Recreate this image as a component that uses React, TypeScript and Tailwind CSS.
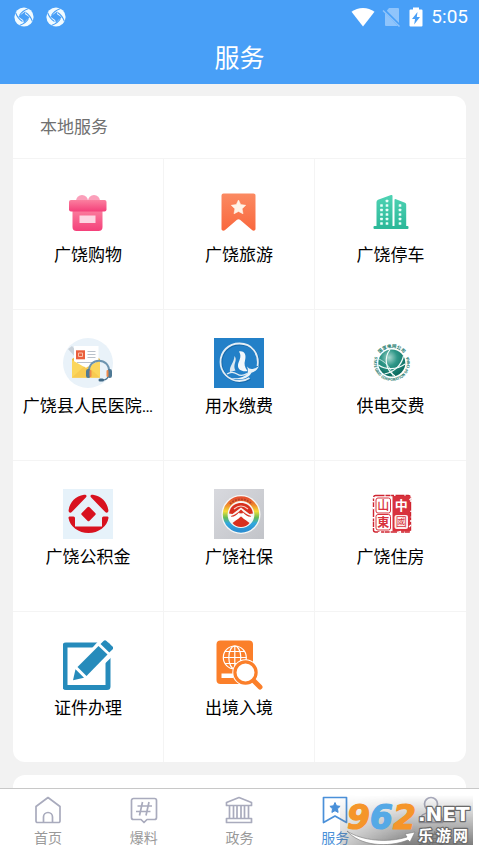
import type { ReactNode } from "react";
import clsx from "clsx";

const GiftIcon = () => (
  <svg viewBox="0 0 50 50" className="size-[50px]" aria-hidden="true">
    <defs>
      <linearGradient id="gift" x1="0" y1="0" x2="0" y2="1">
        <stop offset="0" stopColor="#fb7f9f" />
        <stop offset="1" stopColor="#f4407a" />
      </linearGradient>
    </defs>
    <circle cx="19" cy="14" r="6" fill="#fb9fba" />
    <circle cx="31" cy="14" r="6" fill="#fb9fba" />
    <path d="M9.500 22h30v18a4 4 0 0 1-4 4h-22a4 4 0 0 1-4-4z" fill="url(#gift)" />
    <rect x="6" y="13" width="37.500" height="11.500" rx="2" fill="url(#gift)" />
    <rect x="16.500" y="28.500" width="16" height="7.500" fill="#fdd5e2" />
  </svg>
);

const TravelIcon = () => (
  <svg viewBox="0 0 50 50" className="size-[50px]" aria-hidden="true">
    <defs>
      <linearGradient id="travel" x1="0" y1="0" x2="0" y2="1">
        <stop offset="0" stopColor="#fb8a62" />
        <stop offset="1" stopColor="#f9683e" />
      </linearGradient>
    </defs>
    <path d="M9.500 6.500h30a2 2 0 0 1 2 2v33.500c0 1.500-2 2.200-3.200 1.200L26 32.800q-1.500-1.200-3 0L10.800 43.200c-1.300 1-3.300.3-3.300-1.200V8.500a2 2 0 0 1 2-2z" fill="url(#travel)" />
    <path d="M24.500 13l2.200 4.600 5 .7-3.600 3.500.9 5-4.500-2.400-4.500 2.400.9-5-3.600-3.500 5-.7z" fill="#fff3e8" stroke="#fff3e8" strokeWidth=".6" strokeLinejoin="round" />
  </svg>
);

const windows = [
  [21, 14], [15.5, 18.5], [21, 18.5], [34, 18.5],
  [15.5, 23], [21, 23], [34, 23],
  [15.5, 27.5], [21, 27.5], [34, 27.5],
  [15.5, 32], [21, 32], [34, 32],
  [15.5, 36.5], [21, 36.5], [34, 36.5],
];

const ParkingIcon = () => (
  <svg viewBox="0 0 50 50" className="size-[50px]" aria-hidden="true">
    <defs>
      <linearGradient id="parking" x1="0" y1="0" x2="0" y2="1">
        <stop offset="0" stopColor="#4fd3b4" />
        <stop offset="1" stopColor="#2db99a" />
      </linearGradient>
    </defs>
    <path d="M10.500 40V15q0-1.500 1.500-2.200L25 8q1.500-.5 1.500 1v31zM28.500 40V13q0-1.500 1.500-.8l9 3.600q1.200.6 1.200 1.700V40z" fill="url(#parking)" />
    <rect x="7.500" y="39" width="35" height="3" rx="1" fill="#2db99a" />
    {windows.map(([x, y]) => (
      <rect key={`${x}-${y}`} x={x - 1.3} y={y - 1.3} width="2.600" height="2.600" rx=".5" fill="#eafff9" />
    ))}
  </svg>
);

const HospitalIcon = () => (
  <svg viewBox="0 0 50 50" className="size-[50px]" aria-hidden="true">
    <circle cx="25" cy="25" r="25" fill="#e9f2f9" />
    <path d="M5 11l4-3 5 6v7z" fill="#c9d2da" />
    <path d="M9 21l14-9 14 9v18.500H9z" fill="#efbd45" />
    <path d="M11 8h24.500v18L23 32 11 26z" fill="#fff" />
    <rect x="13" y="12.300" width="9" height="9" fill="#ea5f3d" />
    <path d="M15.500 15h4v3.500h-4z" fill="none" stroke="#f9c0a8" strokeWidth="1" />
    <path d="M24.500 13.500h8M24.500 16.500h8M24.500 19.500h8M14 24.500h15" stroke="#b9c1cb" strokeWidth="1" />
    <path d="M9 22l14 8 14-8v17.500H9z" fill="#fbd65c" />
    <path d="M9 39.500l12-11 2 1.500 2-1.500 12 11z" fill="#f7ca50" />
    <path d="M26 34c-1-15 21-15 20 0" fill="none" stroke="#6c94b0" strokeWidth="2" />
    <path d="M45.500 37q-.5 5-6 5" fill="none" stroke="#456b89" strokeWidth="1.300" />
    <rect x="23" y="31" width="4.500" height="9" rx="2.200" fill="#4f7995" />
    <rect x="26.500" y="32" width="2" height="7" rx="1" fill="#f08a4a" />
    <rect x="44.500" y="31" width="4.500" height="9" rx="2.200" fill="#4f7995" />
    <rect x="43.500" y="32" width="2" height="7" rx="1" fill="#f08a4a" />
    <rect x="35.500" y="40.500" width="5.500" height="3" rx="1.500" fill="#3f6886" />
  </svg>
);

const WaterIcon = () => (
  <svg viewBox="0 0 50 50" className="size-[50px]" aria-hidden="true">
    <rect width="50" height="50" fill="#2380c8" />
    <path d="M43.500 28C45.500 16 38 5.500 25.500 5.500 14 5.500 6.500 14 6.500 24S14.500 43 25.500 43c4 0 7-1 10-3" fill="none" stroke="#135a94" strokeWidth="2.200" opacity=".6" transform="translate(.8 .8)" />
    <path d="M43.500 28C45.500 16 38 5.500 25.500 5.500 14 5.500 6.500 14 6.500 24S14.500 43 25.500 43c4 0 7-1 10-3" fill="none" stroke="#e3eef6" strokeWidth="1.800" />
    <path d="M25 13.500c6-1 7.500 4 6 9-1 3.500-.5 6.500 2.500 10.500-5 1-10-1-9.500-6 .4-4 4.500-8 1-13.500z" fill="#f3f8fb" />
    <path d="M20.500 18c2.500 3 .5 6 0 9-.3 2 0 4 1 5.500l-5.500 1.500c-1-6 4-8.500 4.500-16z" fill="#dbe8f1" />
    <path d="M13 36c3-2 7-2 10 0s7 1.500 10-.5" fill="none" stroke="#e3eef6" strokeWidth="1.300" />
    <path d="M14 39.500c8 1.500 16 1 19.500-4.500.8-2.500.3-4.500-.5-6.500 1.500 2 3.500 2.600 5.500 2.400 2.500-.3 4.500-1.300 6.500-3.200-1.500 4-4 6-7.500 7C34 41.500 24 43 14 39.500z" fill="#e9f2f8" />
  </svg>
);

const PowerIcon = () => (
  <svg viewBox="0 0 50 50" className="size-[50px]" aria-hidden="true">
    <defs>
      <radialGradient id="globe" cx=".4" cy=".3" r=".75">
        <stop offset="0" stopColor="#a9d8cf" />
        <stop offset=".4" stopColor="#2f9788" />
        <stop offset="1" stopColor="#06655a" />
      </radialGradient>
      <path id="ringTop" d="M12.300 18a15.200 15.200 0 0 1 27 0" />
      <path id="ringBottom" d="M9 18.500a18 18 0 1 0 33.600 0" />
    </defs>
    <circle cx="25.800" cy="25" r="13.500" fill="url(#globe)" />
    <g fill="none" stroke="#f2fbf9" strokeWidth="1.200">
      <path d="M24 11.500c-6 8-5 20 5 26.500" />
      <path d="M12.500 27c7 5 18 5 26.500-1" />
      <path d="M37.500 18c-2 9-9 16-19 18" />
      <path d="M13 21c8 4 12 9 14 17" strokeWidth=".7" />
    </g>
    <g fill="#14766a" className="font-['Noto_Sans_CJK_SC',sans-serif] font-bold">
      <text fontSize="4.500"><textPath href="#ringTop" startOffset="50%" textAnchor="middle">国家电网公司</textPath></text>
      <text fontSize="3.800"><textPath href="#ringBottom" startOffset="50%" textAnchor="middle">STATE GRID CORPORATION OF CHINA</textPath></text>
    </g>
  </svg>
);

const FundIcon = () => (
  <svg viewBox="0 0 50 50" className="size-[50px]" aria-hidden="true">
    <rect width="50" height="50" fill="#e6f2fa" />
    <g fill="#d8121f">
      <path d="M21 5.800c2.500-.4 3.300 1.300 1.800 2.800L9 22.800c-1.500 1.500-3.600.9-3.400-1.200C6.500 13.500 12.500 7 21 5.800z" />
      <path d="M30 5.800c-2.500-.4-3.300 1.300-1.800 2.800L42 22.800c1.500 1.500 3.600.9 3.400-1.200C44.500 13.500 38.500 7 30 5.800z" />
      <path d="M6.500 27.500h4q1.500 0 1.500 1.500v8.500h27V29q0-1.500 1.500-1.500h4q1.200 0 1 1.500a20.200 17.500 0 0 1-40 0q-.2-1.500 1-1.500z" />
      <rect x="20" y="19.500" width="11" height="11" rx="1.500" transform="rotate(45 25.500 25)" />
    </g>
  </svg>
);

const SocialIcon = () => (
  <svg viewBox="0 0 50 50" className="size-[50px]" aria-hidden="true">
    <defs>
      <linearGradient id="plate" x1="0" y1="0" x2="1" y2="1">
        <stop offset="0" stopColor="#d8d9de" />
        <stop offset="1" stopColor="#c2c4c9" />
      </linearGradient>
      <linearGradient id="rainbow" x1="0" y1="0" x2="0" y2="1">
        <stop offset="0" stopColor="#e5542f" />
        <stop offset=".2" stopColor="#f08b2c" />
        <stop offset=".4" stopColor="#f3de37" />
        <stop offset=".6" stopColor="#63bd57" />
        <stop offset=".78" stopColor="#31a9de" />
        <stop offset="1" stopColor="#2c8fd2" />
      </linearGradient>
    </defs>
    <rect width="50" height="50" fill="url(#plate)" />
    <circle cx="27" cy="25.500" r="19.500" fill="#f7f7f5" />
    <circle cx="27" cy="25.500" r="15.800" fill="none" stroke="url(#rainbow)" strokeWidth="4.800" />
    <path d="M16 15a15.500 15.500 0 0 1 22 0" fill="none" stroke="#b8402a" strokeWidth="1.800" strokeDasharray="2 1" />
    <path d="M15 24.500c1-7 6-10.500 12-10.500s11 3.500 12 10.500l-3.500.5-8.500-6.500-8.500 6.500z" fill="#d8301f" />
    <path d="M18.500 34l8.500-6.500 8.500 6.500c-2 2.500-5 4-8.500 4s-6.500-1.500-8.500-4z" fill="#d8301f" />
    <path d="M17 27c4-1 7-3.500 10-6.500 3 3 6 5.500 10 6.500l-1 3-9-6-9 6z" fill="#d8301f" />
    <path d="M15 27.500c5 1 7-1 10-4l2 2.500-3 4c-4 2-8 1.500-9-2.500zM39 27.500c-5 1-7-1-10-4l-2 2.500 3 4c4 2 8 1.500 9-2.500z" fill="#fff" />
    <path d="M20 20q7-6 14 0" fill="none" stroke="#f6cfc4" strokeWidth="1.200" />
  </svg>
);

const HousingIcon = () => (
  <svg viewBox="0 0 50 50" className="size-[50px]" aria-hidden="true">
    <rect x="7.500" y="6.500" width="37" height="36.500" rx="2" fill="#fff" stroke="#cf2430" strokeWidth="1.400" strokeDasharray="9 1 5 .6 3 1.400" />
    <rect x="26.500" y="7" width="17.500" height="35.500" fill="#d8323d" />
    <rect x="10" y="9" width="14.500" height="15" rx="2" fill="none" stroke="#d8323d" strokeWidth="1" />
    <rect x="10" y="25.500" width="14.500" height="15.500" rx="2" fill="none" stroke="#d8323d" strokeWidth="1" />
    <rect x="28.500" y="26" width="13.500" height="14" rx="2" fill="#fdecec" />
    <g className="font-['Noto_Sans_CJK_SC',sans-serif]" textAnchor="middle">
      <text x="17.300" y="21" fontSize="12" fontWeight="500" fill="#d8323d">山</text>
      <text x="17.300" y="37.700" fontSize="12" fontWeight="700" fill="#d8323d">東</text>
      <text x="35.200" y="21" fontSize="13" fontWeight="700" fill="#fff">中</text>
      <text x="35.200" y="37" fontSize="11" fill="#d8323d">國</text>
    </g>
    <path d="M6 12l2 1M6.500 20l2-1M45.500 9l-2 2M45 36l-2 2M12 43.800l3-1M31 43.500l4-1" stroke="#fff" strokeWidth="1.300" />
  </svg>
);

const PaperworkIcon = () => (
  <svg viewBox="0 0 50 50" className="size-[50px]" aria-hidden="true">
    <rect x="2" y="5" width="43" height="42.500" rx="1" fill="none" stroke="#268bbb" strokeWidth="5" />
    <path d="M8 42L12 27 39-3 55 11 27 38z" fill="#fff" />
    <path d="M10 40.200l2.500-11 8.500 8.500z" fill="#268bbb" />
    <path d="M14.500 27L35.500 6l9 8.500-21 21.500z" fill="#268bbb" />
    <path d="M37.500 4l3-3q1.500-1.500 3 0l6 5.500q1.500 1.500 0 3l-3.200 3z" fill="#268bbb" />
  </svg>
);

const BorderIcon = () => (
  <svg viewBox="0 0 50 50" className="size-[50px]" aria-hidden="true">
    <rect x="2.500" y=".5" width="36.500" height="43.500" rx="4" fill="#fb7f2a" />
    <g fill="none" stroke="#fff" strokeWidth="1.200">
      <circle cx="20.800" cy="17.500" r="11.500" />
      <ellipse cx="20.800" cy="17.500" rx="6" ry="11.500" />
      <path d="M20.800 6v23M9.300 17.500h23M11 11.500h19.600M11 23.500h19.600" />
    </g>
    <rect x="7.500" y="33.500" width="12" height="4.500" fill="#fff" />
    <path d="M39 40l7 7" stroke="#fff" strokeWidth="7" strokeLinecap="round" />
    <circle cx="31.500" cy="32.500" r="13.200" fill="#fff" />
    <path d="M39.500 40.500l6.500 6.500" stroke="#fb7f2a" strokeWidth="5" strokeLinecap="round" />
    <circle cx="31.500" cy="32.500" r="10.600" fill="#fff" stroke="#fb7f2a" strokeWidth="3.200" />
  </svg>
);

type Service = { name: string; icon: ReactNode };

const services: Service[] = [
  { name: "广饶购物", icon: <GiftIcon /> },
  { name: "广饶旅游", icon: <TravelIcon /> },
  { name: "广饶停车", icon: <ParkingIcon /> },
  { name: "广饶县人民医院…", icon: <HospitalIcon /> },
  { name: "用水缴费", icon: <WaterIcon /> },
  { name: "供电交费", icon: <PowerIcon /> },
  { name: "广饶公积金", icon: <FundIcon /> },
  { name: "广饶社保", icon: <SocialIcon /> },
  { name: "广饶住房", icon: <HousingIcon /> },
  { name: "证件办理", icon: <PaperworkIcon /> },
  { name: "出境入境", icon: <BorderIcon /> },
];

const tabs = [
  { name: "首页", icon: <path d="M2 10.500L14 1.500l12 9V25a1.500 1.500 0 0 1-1.500 1.500h-21A1.500 1.500 0 0 1 2 25zM9.500 26.500V21a4.500 4.500 0 0 1 9 0v5.500" /> },
  { name: "爆料", icon: <path d="M3.500 2.500h21a2 2 0 0 1 2 2v17a2 2 0 0 1-2 2H17l-3 3-3-3H3.500a2 2 0 0 1-2-2v-17a2 2 0 0 1 2-2zM12.500 6l-3 13.500M19 6l-3 13.500M7.500 10h14.500M6 15.500h14.500" /> },
  { name: "政务", icon: <path d="M14 1.500L26.500 6.500v3h-25v-3zM4.500 9.500v13M8.500 9.500v13M12 9.500v13M16 9.500v13M19.500 9.500v13M23.500 9.500v13M1.500 22.500h25v4h-25z" /> },
  { name: "服务", active: true, icon: <><path d="M2.500 1.500h23v25L14 20 2.500 26.500z" /><path d="M14 6.500l1.500 3.300 3.600.5-2.600 2.500.6 3.600L14 14.700l-3.100 1.700.6-3.600-2.600-2.500 3.600-.5z" fill="currentColor" strokeWidth="1" /></> },
  { name: "我的", icon: <><circle cx="14" cy="8" r="6.500" /><path d="M2.500 26.500c0-7 5-10 11.500-10s11.500 3 11.500 10z" /></> },
];

const SwirlIcon = () => (
  <svg viewBox="0 0 20 20" className="size-5" aria-hidden="true">
    <circle cx="10" cy="10" r="9.600" fill="#f1fbff" />
    <path d="M11.500 4.200L10.800 7l4.800 3.200-1.200 1.300-1.500 1-3 3.300-.8-2.800-4.700-3.200L5.600 8.500l1.600-1z" fill="#489ff7" />
    {[0, 90, 180, 270].map((angle) => (
      <path key={angle} d="M5.500 8.500Q8 4 14.500 1.500" fill="none" stroke="#489ff7" strokeWidth="1.100" transform={`rotate(${angle} 10 10)`} />
    ))}
  </svg>
);

const StatusBar = () => (
  <div className="flex h-[34px] items-center justify-between pr-[11px] pl-[14px]">
    <div className="flex gap-3">
      <SwirlIcon />
      <SwirlIcon />
    </div>
    <div className="flex items-center text-white">
      <svg viewBox="0 0 24 20" className="h-5 w-6" fill="currentColor" aria-hidden="true">
        <path d="M12 19.500L.5 4.800Q5.500 1 12 1t11.500 3.800z" />
      </svg>
      <svg viewBox="0 0 20 20" className="ml-[7px] size-5" aria-hidden="true">
        <path d="M7 1h9q1 0 1 1v16q0 1-1 1H4q-1 0-1-1V6z" fill="#8fc4fb" />
        <path d="M1 2l17 17" stroke="#489ff7" strokeWidth="3" />
        <path d="M1 3.500L17.500 19.500" stroke="#8fc4fb" strokeWidth="1.500" />
      </svg>
      <svg viewBox="0 0 14 20" className="ml-[7px] h-5 w-[14px]" aria-hidden="true">
        <path d="M4 .5h6v2h2.500q1 0 1 1v15q0 1-1 1h-11q-1 0-1-1v-15q0-1 1-1H4z" fill="#fff" />
        <path d="M8.500 5L3 12h3l-.8 5.500L11 10H7.800z" fill="#489ff7" />
      </svg>
      <span className="ml-2 text-[19px] leading-5">5:05</span>
    </div>
  </div>
);

const ServiceCell = ({ name, icon }: Service) => (
  <li className="h-[151px] border-t border-r border-[#f4f4f4] nth-[3n]:border-r-0">
    <button type="button" className="flex size-full flex-col items-center pt-7 text-black">
      {icon}
      <span className="mt-1.5 max-w-full overflow-hidden text-[17px] leading-6 whitespace-nowrap">{name}</span>
    </button>
  </li>
);

const SiteBadge = () => (
  <svg
    viewBox="0 0 133 50"
    className="pointer-events-none absolute right-1.5 bottom-1.5 h-[50px] w-[133px] font-['DejaVu_Sans','Noto_Sans_CJK_SC',sans-serif] font-bold"
    strokeLinejoin="round"
    role="img"
    aria-label="962.NET 乐游网"
  >
    <defs>
      <linearGradient id="shade" x1="0" y1="0" x2="0" y2="1">
        <stop offset="0" stopColor="#777" stopOpacity="0" />
        <stop offset="1" stopColor="#666" stopOpacity=".85" />
      </linearGradient>
      <linearGradient id="shadeIn" x1="0" y1="0" x2="1" y2="0">
        <stop offset="0" stopColor="#fff" stopOpacity=".35" />
        <stop offset=".5" stopColor="#fff" />
      </linearGradient>
      <mask id="fade">
        <rect width="133" height="50" fill="url(#shadeIn)" />
      </mask>
    </defs>
    <rect width="133" height="50" fill="url(#shade)" mask="url(#fade)" />
    <path d="M7 36C22 46 48 48 67 42l-2-3 10-2-5 10-2-2C48 53 20 51 7 36z" fill="#fff" stroke="#777" strokeWidth=".6" />
    <g strokeWidth="1.200" fontSize="33" fontStyle="italic">
      <text x="7" y="34" fill="#f5952a" stroke="#f5952a">9<tspan fill="#55a9e6" stroke="#55a9e6">6</tspan>2</text>
    </g>
    <g paintOrder="stroke" stroke="#6b6b6b" strokeWidth="2.500" fill="#fff">
      <text x="78" y="26" fontSize="20">.NET</text>
      <text x="78 96 113" y="46" fontSize="15">乐游网</text>
    </g>
  </svg>
);

const App = () => {
  return (
    <div className="flex h-screen flex-col bg-[#f2f2f2] font-[Roboto,'Noto_Sans_CJK_SC',sans-serif]" lang="zh-CN">
      <header className="h-21 shrink-0 bg-[#489ff7]">
        <StatusBar />
        <h1 className="text-center text-[25px] leading-[50px] text-white">服务</h1>
      </header>

      <main className="flex min-h-0 flex-1 flex-col gap-[13px] overflow-hidden px-[13px] pt-3">
        <section className="shrink-0 overflow-hidden rounded-xl bg-white">
          <h2 className="px-[27px] text-[17px] leading-[62px] text-[#707070]">本地服务</h2>
          <ul className="grid grid-cols-3">
            {services.map((service) => (
              <ServiceCell key={service.name} {...service} />
            ))}
            <li className="border-t border-[#f4f4f4]" aria-hidden="true" />
          </ul>
        </section>
        <section className="h-40 shrink-0 rounded-xl bg-white" />
      </main>

      <nav className="relative shrink-0 border-t border-[#c8c8c8] bg-white">
        <ul className="grid h-[62px] grid-cols-5">
          {tabs.map(({ name, icon, active }) => (
            <li key={name}>
              <a href="#" className={clsx("flex flex-col items-center pt-[7px]", active ? "text-[#4a90d9]" : "text-[#a9abbd]")}>
                <svg viewBox="0 0 28 28" className="size-7" fill="none" stroke="currentColor" strokeWidth="1.700" strokeLinejoin="round" aria-hidden="true">
                  {icon}
                </svg>
                <span className={clsx("mt-1 text-sm leading-5", !active && "text-[#999]")}>{name}</span>
              </a>
            </li>
          ))}
        </ul>
        <SiteBadge />
      </nav>
    </div>
  );
};

export default App;
